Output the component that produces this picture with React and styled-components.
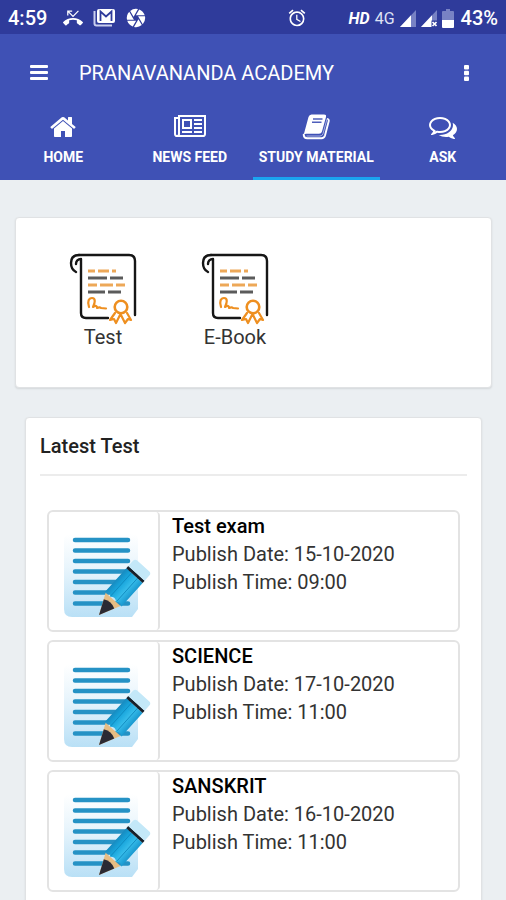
import React, { useState } from 'react';
import styled, { createGlobalStyle } from 'styled-components';
import { MdAlarm, MdCamera, MdPhoneMissed } from 'react-icons/md';

const HomeIcon = () => (
    <svg width="28" height="28" viewBox="0 0 1792 1792" fill="currentColor" aria-hidden="true">
        <path d="M1472 992v480q0 26-19 45t-45 19h-384v-384h-256v384h-384q-26 0-45-19t-19-45v-480q0-1 .5-3t.5-3l575-474 575 474q1 2 1 6zm223-69l-62 74q-8 9-21 11h-3q-13 0-21-7l-692-577-692 577q-12 8-24 7-13-2-21-11l-62-74q-8-10-7-23.5t11-21.5l719-599q32-26 76-26t76 26l244 204v-195q0-14 9-23t23-9h192q14 0 23 9t9 23v408l219 182q10 8 11 21.500t-7 23.500z" />
    </svg>
);

const NewsIcon = () => (
    <svg width="32" height="28" viewBox="0 0 2048 1792" fill="currentColor" aria-hidden="true">
        <path d="M1024 512h-384v384h384v-384zm128 640v128h-640v-128h640zm0-768v640h-640v-640h640zm640 768v128h-512v-128h512zm0-256v128h-512v-128h512zm0-256v128h-512v-128h512zm0-256v128h-512v-128h512zm-1536 960v-960h-128v960q0 26 19 45t45 19 45-19 19-45zm1664 0v-1088h-1536v1088q0 33-11 64h1483q26 0 45-19t19-45zm128-1216v1216q0 80-56 136t-136 56h-1664q-80 0-136-56t-56-136v-1088h256v-128h1792z" />
    </svg>
);

const BookIcon = () => (
    <svg width="28" height="28" viewBox="0 0 28 28" fill="none" aria-hidden="true">
        <path d="M9.500 1.500H22q2.500 0 2 2.400L20 18.500q-.6 2.300-3 2.300H4.500q-2 0-2.800 1L6.500 4q.8-2.500 3-2.500z" fill="currentColor" />
        <path
            d="M25.800 6q1.300.6.900 2.200L23 22.500q-.8 2.700-3.500 2.700H5.200q-3.200 0-3.500-3.400"
            stroke="currentColor"
            strokeWidth="1.900"
            strokeLinecap="round"
        />
        <path d="M4.500 23h13.500q2.300 0 3-2.300L25 6" stroke="#a9b1de" strokeWidth="1" />
        <path d="M11 6h9.500M10 9.300h9.500" stroke="#4f5fbb" strokeWidth="1.500" />
    </svg>
);

const AskIcon = () => (
    <svg width="28" height="28" viewBox="0 0 1792 1792" fill="currentColor" aria-hidden="true">
        <path d="M704 384q-153 0-286 52t-211.5 141-78.500 191q0 82 53 158t149 132l97 56-35 84q34-20 62-39l44-31 53 10q78 14 153 14 153 0 286-52t211.5-141 78.500-191-78.500-191-211.5-141-286-52zm0-128q191 0 353.500 68.500t256.5 186.500 94 257-94 257-256.500 186.500-353.500 68.500q-86 0-176-16-124 88-278 128-36 9-86 16h-3q-11 0-20.5-8t-11.5-21q-1-3-1-6.500t.5-6.500 2-6l2.500-5 3.500-5.500 4-5 4.500-5 4-4.500q5-6 23-25t26-29.500 22.500-29 25-38.500 20.500-44q-124-72-195-177t-71-224q0-139 94-257t256.500-186.500 353.500-68.500zm822 1169q10 24 20.500 44t25 38.500 22.500 29 26 29.500 23 25q1 1 4 4.500t4.500 5 4 5 3.500 5.500l2.500 5 2 6 .5 6.500-1 6.500q-3 14-13 22t-22 7q-50-7-86-16-154-40-278-128-90 16-176 16-271 0-472-132 58 4 88 4 161 0 309-45t264-129q125-92 192-212t67-254q0-77-23-152 129 71 204 178t75 230q0 120-71 224.500t-195 176.500z" />
    </svg>
);

const MailIcon = () => (
    <svg width="22" height="20" viewBox="0 0 22 20" fill="none" aria-hidden="true">
        <path d="M1.500 3v12.500a2 2 0 0 0 2 2H19" stroke="#c9ceee" strokeWidth="2" />
        <rect x="4" y="1" width="18" height="14" rx="2" fill="#fff" />
        <path d="M7.500 13V3.500l5.500 5 5.500-5V13" stroke="#2f3b9b" strokeWidth="1.800" />
    </svg>
);

const SignalIcon = ({ noData }) => (
    <svg width="16" height="17" viewBox="0 0 16 17" aria-hidden="true">
        <path d="M16 0v17H0z" fill="#7882c4" />
        <path d="M11 5.300V17H0z" fill="#fff" />
        {noData && <path d="M10.500 10.500H16V17h-5.500z" fill="#2f3b9b" />}
        {noData && <path d="M11.500 12l4 4m0-4l-4 4" stroke="#fff" strokeWidth="1.700" />}
    </svg>
);

const BatteryIcon = () => (
    <svg width="12" height="19" viewBox="0 0 12 19" aria-hidden="true">
        <path d="M4 0h4v2h3a1 1 0 0 1 1 1v8H0V3a1 1 0 0 1 1-1h3z" fill="#7882c4" />
        <path d="M0 11h12v7a1 1 0 0 1-1 1H1a1 1 0 0 1-1-1z" fill="#fff" />
    </svg>
);

const MenuIcon = () => (
    <svg width="18" height="15" viewBox="0 0 18 15" fill="#fff" aria-hidden="true">
        <rect y="0" width="18" height="3" rx="1" />
        <rect y="6" width="18" height="3" rx="1" />
        <rect y="12" width="18" height="3" rx="1" />
    </svg>
);

const MoreIcon = () => (
    <svg width="6" height="18" viewBox="0 0 6 18" fill="#fff" aria-hidden="true">
        <rect y="1" width="5" height="4.500" rx="1" />
        <rect y="6.700" width="5" height="4.500" rx="1" />
        <rect y="12.400" width="5" height="4.500" rx="1" />
    </svg>
);

const ScrollIcon = () => (
    <svg width="68" height="72" viewBox="0 0 68 72" fill="none" strokeLinecap="round" strokeLinejoin="round" aria-hidden="true">
        <g stroke="#161616" strokeWidth="2.400">
            <path d="M10 2h50q6 0 6 6v54" />
            <path d="M10 2C4 2 2 6 2 10c0 4 1 7 5 9" />
            <path d="M7 11c0-3 2-5 5-5v54q0 5 5 5h22" />
        </g>
        <g strokeWidth="2.900" strokeLinecap="butt">
            <path d="M19 18h7m3 0h11m3 0h4" stroke="#eda858" />
            <path d="M19 25h19m3 0h13" stroke="#5b5b5b" />
            <path d="M19 32h9m3 0h13m3 0h9" stroke="#eda858" />
            <path d="M19 39h17m3 0h13" stroke="#5b5b5b" />
        </g>
        <path d="M20 54c-2-6 0-9 3-9 4 0 3 5 1 9 3-2 4-1 4 1 2-1 3-1 4 0l5 .500" stroke="#ee8f20" strokeWidth="2.200" />
        <path d="M46 60l-5 7 4-1 2 4 4-8M58 60l4 7-3-1-3 4-4-8" stroke="#ee8f20" strokeWidth="2.200" />
        <circle cx="52" cy="54" r="6.300" stroke="#ee8f20" strokeWidth="2.600" />
    </svg>
);

const NoteIcon = () => (
    <svg width="90" height="84" viewBox="0 0 90 84" aria-hidden="true">
        <defs>
            <linearGradient id="notePaper" x1="0" y1="0" x2="0" y2="1">
                <stop offset="0" stopColor="#fff" />
                <stop offset="0.400" stopColor="#e9f5fc" />
                <stop offset="1" stopColor="#b9e0f6" />
            </linearGradient>
            <linearGradient id="notePencil" x1="0" y1="0" x2="1" y2="0">
                <stop offset="0" stopColor="#178bc0" />
                <stop offset="0.300" stopColor="#18a5dc" />
                <stop offset="0.650" stopColor="#36bcea" />
                <stop offset="1" stopColor="#1a98cf" />
            </linearGradient>
        </defs>
        <path d="M1 6Q1 0 7 0h62q6 0 6 6v69l-6 8H9q-8 0-8-8z" fill="url(#notePaper)" />
        <path
            d="M12 6h53M12 16.500h53M12 27h53M12 37.500h53M12 48h53M12 58.500h53M12 69.500h53"
            stroke="#2592c5"
            strokeWidth="4.500"
            strokeLinecap="round"
        />
        <g transform="translate(36 81) rotate(42)">
            <path d="M0 0L-10-21h20z" fill="#e8bd83" />
            <path d="M0 0l-7-15q7-4 14 0z" fill="#2b2a33" />
            <path d="M-11-21q4-5 7 0 4-4 8 0 4-4 7 0v-32h-22z" fill="url(#notePencil)" />
            <path d="M-4-22v-31M4-22v-31" stroke="#0f86ba" strokeWidth="0.800" />
            <path d="M-11-56h22v3h-22z" fill="#17212b" />
            <path d="M-11-56v-7q0-3 3-3h16q3 0 3 3v7z" fill="#c3e8f8" />
        </g>
    </svg>
);

const tabs = [
    { title: 'HOME', icon: <HomeIcon /> },
    { title: 'NEWS FEED', icon: <NewsIcon /> },
    { title: 'STUDY MATERIAL', icon: <BookIcon /> },
    { title: 'ASK', icon: <AskIcon /> },
];

const categories = ['Test', 'E-Book'];

const tests = [
    { name: 'Test exam', date: '15-10-2020', time: '09:00' },
    { name: 'SCIENCE', date: '17-10-2020', time: '11:00' },
    { name: 'SANSKRIT', date: '16-10-2020', time: '11:00' },
];

const App = () => {
    const [activeTab, setActiveTab] = useState('STUDY MATERIAL');

    return (
        <>
            <GlobalStyle />
            <Screen>
                <StatusBar>
                    <StatusText>4:59</StatusText>
                    <NoticeIcons>
                        <MdPhoneMissed size={20} />
                        <MailIcon />
                        <MdCamera size={22} />
                    </NoticeIcons>
                    <AlarmHolder>
                        <MdAlarm size={20} />
                    </AlarmHolder>
                    <SystemIcons>
                        <HdLabel>HD</HdLabel>
                        <NetworkLabel>4G</NetworkLabel>
                        <SignalIcon />
                        <SignalIcon noData />
                        <BatteryIcon />
                        <StatusText>43%</StatusText>
                    </SystemIcons>
                </StatusBar>

                <Header>
                    <Toolbar>
                        <IconButton aria-label="Menu">
                            <MenuIcon />
                        </IconButton>
                        <AppTitle>PRANAVANANDA ACADEMY</AppTitle>
                        <IconButton aria-label="More options">
                            <MoreIcon />
                        </IconButton>
                    </Toolbar>
                    <Tabs>
                        {tabs.map((tab) => (
                            <Tab key={tab.title} $active={tab.title === activeTab} onClick={() => setActiveTab(tab.title)}>
                                {tab.icon}
                                <span>{tab.title}</span>
                            </Tab>
                        ))}
                    </Tabs>
                </Header>

                <Content>
                    <CategoryCard>
                        {categories.map((category) => (
                            <Category key={category}>
                                <ScrollIcon />
                                <span>{category}</span>
                            </Category>
                        ))}
                    </CategoryCard>

                    <LatestCard>
                        <LatestTitle>Latest Test</LatestTitle>
                        <TestList>
                            {tests.map((test) => (
                                <TestItem key={test.name}>
                                    <Thumb>
                                        <NoteIcon />
                                    </Thumb>
                                    <TestInfo>
                                        <TestName>{test.name}</TestName>
                                        <p>Publish Date: {test.date}</p>
                                        <p>Publish Time: {test.time}</p>
                                    </TestInfo>
                                </TestItem>
                            ))}
                        </TestList>
                    </LatestCard>
                </Content>
            </Screen>
        </>
    );
};

export default App;

const GlobalStyle = createGlobalStyle`
    * {
        box-sizing: border-box;
    }
    body {
        margin: 0;
        background: #ebeff2;
        font-family: Roboto, "Liberation Sans", sans-serif;
        color: #333;
    }
    h1, h2, h3, p, ul {
        margin: 0;
        padding: 0;
    }
    button {
        border: 0;
        padding: 0;
        background: none;
        font-family: inherit;
        color: inherit;
        cursor: pointer;
    }
    svg {
        display: block;
        flex-shrink: 0;
    }
`;

const Screen = styled.div`
    display: flex;
    flex-direction: column;
    height: 100vh;
    overflow: hidden;
`;

const StatusBar = styled.div`
    display: flex;
    align-items: center;
    flex-shrink: 0;
    height: 34px;
    padding: 2px 8px 0;
    background: #2f3b9b;
    color: #fff;
`;

const StatusText = styled.span`
    font-size: 20px;
    font-weight: 500;
`;

const NoticeIcons = styled.div`
    display: flex;
    align-items: center;
    gap: 10px;
    margin-left: 16px;
`;

const AlarmHolder = styled.div`
    flex: 1;
    display: flex;
    justify-content: flex-end;
    padding-right: 42px;
`;

const SystemIcons = styled.div`
    display: flex;
    align-items: center;
    gap: 5px;

    ${StatusText} {
        margin-left: 2px;
    }
`;

const HdLabel = styled.span`
    font-size: 16px;
    font-weight: 700;
    font-style: italic;
`;

const NetworkLabel = styled.span`
    font-size: 16px;
    color: #dfe2f5;
`;

const Header = styled.header`
    flex-shrink: 0;
    background: #3f51b5;
    color: #fff;
`;

const Toolbar = styled.div`
    display: flex;
    align-items: center;
    height: 77px;
    padding: 0 30px;
`;

const IconButton = styled.button`
    display: grid;
    place-items: center;
    min-width: 18px;
    height: 40px;
`;

const AppTitle = styled.h1`
    flex: 1;
    margin-left: 31px;
    font-size: 20px;
    font-weight: 400;
    line-height: 24px;
`;

const Tabs = styled.nav`
    display: grid;
    grid-template-columns: repeat(4, 1fr);
`;

const Tab = styled.button`
    display: flex;
    flex-direction: column;
    align-items: center;
    gap: 8px;
    height: 69px;
    padding-top: 2px;
    border-bottom: 3px solid ${({ $active }) => ($active ? '#1ba5f0' : 'transparent')};
    font-size: 14px;
    font-weight: 700;
    line-height: 16px;
    white-space: nowrap;
`;

const Content = styled.main`
    flex: 1;
    padding: 37px 14px 0 15px;
    overflow-y: auto;
    scrollbar-width: none;
`;

const Card = styled.section`
    background: #fff;
    border: 1px solid #e0e2e4;
    border-radius: 4px;
    box-shadow: 0 1px 2px rgba(0, 0, 0, 0.1);
`;

const CategoryCard = styled(Card)`
    display: flex;
    min-height: 171px;
    padding: 35px 21px;
`;

const Category = styled.button`
    display: flex;
    flex-direction: column;
    align-items: center;
    align-self: flex-start;
    width: 132px;
    font-size: 20px;
    line-height: 24px;
`;

const LatestCard = styled(Card)`
    margin: 29px 10px 0;
    padding: 14px 14px 30px;
`;

const LatestTitle = styled.h2`
    padding-bottom: 14px;
    border-bottom: 2px solid #ececec;
    font-size: 20px;
    font-weight: 500;
    line-height: 28px;
    color: #222;
`;

const TestList = styled.ul`
    display: flex;
    flex-direction: column;
    gap: 8px;
    margin: 34px 7px 0;
    list-style: none;
`;

const TestItem = styled.li`
    display: flex;
    border: 2px solid #e3e3e3;
    border-radius: 6px;
`;

const Thumb = styled.div`
    display: grid;
    place-items: center;
    width: 111px;
    height: 118px;
    padding: 10px 0 0 8px;
    border-right: 2px solid #e3e3e3;
    border-radius: 4px;
`;

const TestInfo = styled.div`
    padding-left: 12px;
    font-size: 20px;
    line-height: 28px;
`;

const TestName = styled.h3`
    font-size: 20px;
    font-weight: 500;
    line-height: 28px;
    color: #000;
`;
